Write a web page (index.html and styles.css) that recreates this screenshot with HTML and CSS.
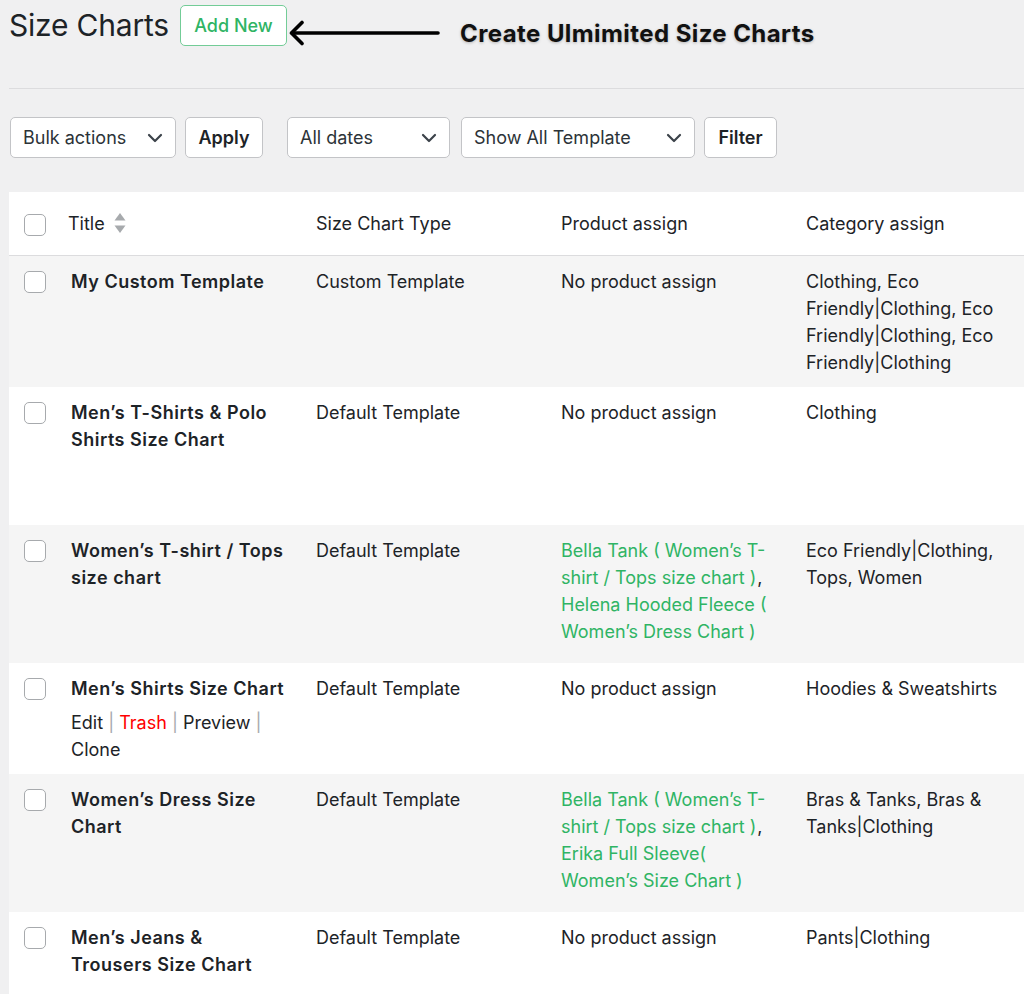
FILE: index.html
```html
<!DOCTYPE html>
<html lang="en">
<head>
<meta charset="utf-8">
<title>Size Charts</title>
<link rel="stylesheet" href="styles.css">
</head>
<body>
<div class="page">
  <header class="head">
    <h1 class="page-title">Size Charts</h1>
    <a class="add-new" href="#">Add New</a>
    <svg class="arrow" width="152" height="26" viewBox="0 0 152 26" aria-hidden="true">
      <path d="M4 13 H150" stroke="#000" stroke-width="3.6" stroke-linecap="round" fill="none"/>
      <path d="M14 2.5 L3.5 13 L14 23.5" stroke="#000" stroke-width="3.6" stroke-linecap="round" stroke-linejoin="round" fill="none"/>
    </svg>
    <span class="callout">Create Ulmimited Size Charts</span>
  </header>

  <hr class="sep">

  <div class="toolbar">
    <div class="select select-bulk"><span>Bulk actions</span><svg class="chev" width="16" height="10" viewBox="0 0 16 10"><path d="M2 2 L8 8 L14 2" stroke="#3c434a" stroke-width="2.2" fill="none" stroke-linecap="round" stroke-linejoin="round"/></svg></div>
    <button class="btn btn-apply">Apply</button>
    <div class="select select-dates"><span>All dates</span><svg class="chev" width="16" height="10" viewBox="0 0 16 10"><path d="M2 2 L8 8 L14 2" stroke="#3c434a" stroke-width="2.2" fill="none" stroke-linecap="round" stroke-linejoin="round"/></svg></div>
    <div class="select select-tpl"><span>Show All Template</span><svg class="chev" width="16" height="10" viewBox="0 0 16 10"><path d="M2 2 L8 8 L14 2" stroke="#3c434a" stroke-width="2.2" fill="none" stroke-linecap="round" stroke-linejoin="round"/></svg></div>
    <button class="btn btn-filter">Filter</button>
  </div>

  <div class="table-wrap">
    <table class="list">
      <colgroup>
        <col class="c-check"><col class="c-title"><col class="c-type"><col class="c-prod"><col class="c-cat">
      </colgroup>
      <thead>
        <tr>
          <th class="check"><span class="cb"></span></th>
          <th class="th-title">Title <svg class="sort" width="12" height="22" viewBox="0 0 12 22"><path d="M6 1 L11.5 8.5 H0.5 Z" fill="#a7aaad"/><path d="M6 21 L11.5 13.5 H0.5 Z" fill="#a7aaad"/></svg></th>
          <th>Size Chart Type</th>
          <th>Product assign</th>
          <th>Category assign</th>
        </tr>
      </thead>
      <tbody>
        <tr class="alt">
          <td class="check"><span class="cb"></span></td>
          <td class="title"><strong>My Custom Template</strong><div class="actions hidden">Edit <span class="sep-pipe">|</span> <span class="trash">Trash</span> <span class="sep-pipe">|</span> Preview <span class="sep-pipe">|</span> Clone</div></td>
          <td>Custom Template</td>
          <td>No product assign</td>
          <td>Clothing, Eco Friendly|Clothing, Eco Friendly|Clothing, Eco Friendly|Clothing</td>
        </tr>
        <tr>
          <td class="check"><span class="cb"></span></td>
          <td class="title"><strong>Men’s T-Shirts &amp; Polo Shirts Size Chart</strong><div class="actions hidden">Edit <span class="sep-pipe">|</span> <span class="trash">Trash</span> <span class="sep-pipe">|</span> Preview <span class="sep-pipe">|</span> Clone</div></td>
          <td>Default Template</td>
          <td>No product assign</td>
          <td>Clothing</td>
        </tr>
        <tr class="alt">
          <td class="check"><span class="cb"></span></td>
          <td class="title"><strong>Women’s T-shirt / Tops size chart</strong><div class="actions hidden">Edit <span class="sep-pipe">|</span> <span class="trash">Trash</span> <span class="sep-pipe">|</span> Preview <span class="sep-pipe">|</span> Clone</div></td>
          <td>Default Template</td>
          <td><a class="link" href="#">Bella Tank ( Women’s T-shirt / Tops size chart )</a><span class="comma">,</span> <a class="link" href="#">Helena Hooded Fleece ( Women’s Dress Chart )</a></td>
          <td>Eco Friendly|Clothing, Tops, Women</td>
        </tr>
        <tr>
          <td class="check"><span class="cb"></span></td>
          <td class="title"><strong>Men’s Shirts Size Chart</strong><div class="actions">Edit <span class="sep-pipe">|</span> <span class="trash">Trash</span> <span class="sep-pipe">|</span> Preview <span class="sep-pipe">|</span> Clone</div></td>
          <td>Default Template</td>
          <td>No product assign</td>
          <td>Hoodies &amp; Sweatshirts</td>
        </tr>
        <tr class="alt">
          <td class="check"><span class="cb"></span></td>
          <td class="title"><strong>Women’s Dress Size Chart</strong><div class="actions hidden">Edit <span class="sep-pipe">|</span> <span class="trash">Trash</span> <span class="sep-pipe">|</span> Preview <span class="sep-pipe">|</span> Clone</div></td>
          <td>Default Template</td>
          <td><a class="link" href="#">Bella Tank ( Women’s T-shirt / Tops size chart )</a><span class="comma">,</span> <a class="link" href="#">Erika Full Sleeve( Women’s Size Chart )</a></td>
          <td>Bras &amp; Tanks, Bras &amp; Tanks|Clothing</td>
        </tr>
        <tr>
          <td class="check"><span class="cb"></span></td>
          <td class="title"><strong>Men’s Jeans &amp; Trousers Size Chart</strong><div class="actions hidden">Edit <span class="sep-pipe">|</span> <span class="trash">Trash</span> <span class="sep-pipe">|</span> Preview <span class="sep-pipe">|</span> Clone</div></td>
          <td>Default Template</td>
          <td>No product assign</td>
          <td>Pants|Clothing</td>
        </tr>
      </tbody>
    </table>
  </div>
</div>
</body>
</html>
```

FILE: styles.css
```css
html, body {
  margin: 0;
  padding: 0;
  background: #f0f0f1;
  overflow: hidden;
}

body {
  font-family: Inter, "Noto Sans", "DejaVu Sans", sans-serif;
  color: #1d2327;
  font-size: 18px;
}

.page {
  padding: 5px 0 0 9px;
}

.head {
  display: flex;
  align-items: flex-start;
  height: 41px;
}

.page-title {
  margin: 0;
  font-size: 30px;
  font-weight: 400;
  line-height: 41px;
  color: #1d2327;
  letter-spacing: -0.2px;
}

.add-new {
  margin-left: 11px;
  height: 39px;
  width: 105px;
  box-sizing: content-box;
  display: flex;
  align-items: center;
  justify-content: center;
  border: 1px solid #73cc97;
  border-radius: 5px;
  background: #fff;
  color: #2fb464;
  font-weight: 500;
  font-size: 18px;
  text-decoration: none;
}

.arrow {
  margin-left: 1px;
  margin-top: 15px;
  flex: none;
}

.callout {
  margin-left: 20px;
  margin-top: 14px;
  font-size: 24px;
  font-weight: 700;
  line-height: 30px;
  letter-spacing: 0.42px;
  color: #111;
  text-shadow: 0 1px 3px rgba(0, 0, 0, 0.25);
}

.sep {
  margin: 42px 0 0 0;
  border: 0;
  border-top: 1px solid #dcdcde;
  height: 0;
}

.toolbar {
  display: flex;
  align-items: center;
  margin-top: 28px;
  padding-left: 1px;
}

.select {
  height: 39px;
  box-sizing: content-box;
  border: 1px solid #c3c4c7;
  border-radius: 5px;
  background: #fff;
  display: flex;
  align-items: center;
  justify-content: space-between;
  padding: 0 12px 0 12px;
  color: #2c3338;
  font-size: 18px;
}

.select-bulk { width: 140px; }
.select-dates { width: 137px; margin-left: 24px; }
.select-tpl { width: 208px; margin-left: 11px; }

.chev { flex: none; }

.btn {
  height: 41px;
  border: 1px solid #c3c4c7;
  border-radius: 5px;
  background: #fff;
  font-family: inherit;
  font-size: 18px;
  font-weight: 600;
  color: #1d2327;
  padding: 0;
}

.btn-apply { width: 78px; margin-left: 9px; }
.btn-filter { width: 73px; margin-left: 9px; }

.table-wrap {
  margin-top: 34px;
  overflow: hidden;
}

.list {
  border-collapse: collapse;
  table-layout: fixed;
  width: 1030px;
  background: #fff;
}

.c-check { width: 48px; }
.c-title { width: 246px; }
.c-type { width: 245px; }
.c-prod { width: 245px; }
.c-cat { width: 246px; }

.list th {
  text-align: left;
  font-weight: 400;
  padding: 18px 13px 18px 13px;
  line-height: 27px;
  border-bottom: 1px solid #dcdcde;
  vertical-align: middle;
  white-space: nowrap;
}

.list th.th-title {
  padding-left: 11px;
}

.sort {
  vertical-align: middle;
  margin-left: 4px;
  position: relative;
  top: -2px;
}

.list td {
  vertical-align: top;
  padding: 12px 13px 11px 13px;
  line-height: 27px;
}

.list td.title {
  padding-left: 14px;
  padding-right: 16px;
}

.list th.check,
.list td.check {
  padding-left: 15px;
  padding-right: 0;
}

.list th.check .cb {
  vertical-align: middle;
  position: relative;
  top: 1px;
}

.list td.check .cb {
  margin-top: 3px;
}

.cb {
  display: block;
  width: 20px;
  height: 20px;
  border: 1px solid #a7aaad;
  border-radius: 5px;
  background: #fff;
}

.list tr.alt td {
  background: #f5f5f5;
}

.title strong {
  display: block;
  font-weight: 600;
  letter-spacing: 0.5px;
  color: #1d2327;
}

.actions {
  padding-top: 7px;
  color: #1d2327;
}

.actions.hidden {
  visibility: hidden;
}

.sep-pipe {
  color: #a7aaad;
}

.trash {
  color: #f00;
}

.link {
  color: #2fb464;
  text-decoration: none;
}

.comma {
  margin-left: 1px;
}
```
